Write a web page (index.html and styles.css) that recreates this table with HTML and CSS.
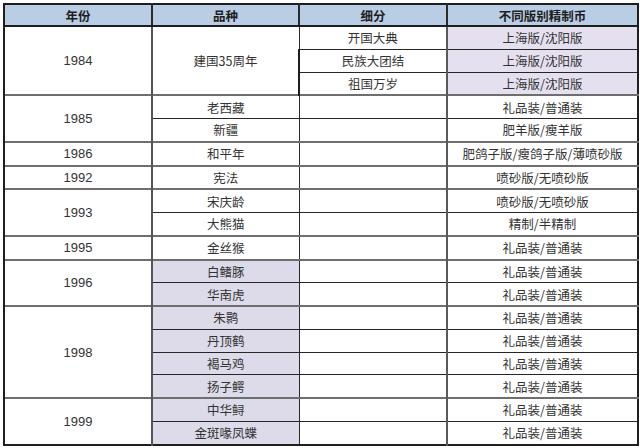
FILE: index.html
```html
<!DOCTYPE html>
<html lang="zh">
<head>
<meta charset="utf-8">
<link rel="stylesheet" href="styles.css">
</head>
<body>
<table class="coins">
  <colgroup>
    <col class="c-year"><col class="c-kind"><col class="c-sub"><col class="c-ver">
  </colgroup>
  <thead>
    <tr><th>年份</th><th>品种</th><th>细分</th><th>不同版别精制币</th></tr>
  </thead>
  <tbody>
    <tr class="grp"><td rowspan="3" class="y">1984</td><td rowspan="3">建国35周年</td><td>开国大典</td><td class="lav">上海版/沈阳版</td></tr>
    <tr><td>民族大团结</td><td class="lav">上海版/沈阳版</td></tr>
    <tr><td>祖国万岁</td><td class="lav">上海版/沈阳版</td></tr>
    <tr class="grp"><td rowspan="2" class="y">1985</td><td>老西藏</td><td></td><td>礼品装/普通装</td></tr>
    <tr><td>新疆</td><td></td><td>肥羊版/瘦羊版</td></tr>
    <tr class="grp"><td class="y">1986</td><td>和平年</td><td></td><td>肥鸽子版/瘦鸽子版/薄喷砂版</td></tr>
    <tr class="grp"><td class="y">1992</td><td>宪法</td><td></td><td>喷砂版/无喷砂版</td></tr>
    <tr class="grp"><td rowspan="2" class="y">1993</td><td>宋庆龄</td><td></td><td>喷砂版/无喷砂版</td></tr>
    <tr><td>大熊猫</td><td></td><td>精制/半精制</td></tr>
    <tr class="grp"><td class="y">1995</td><td>金丝猴</td><td></td><td>礼品装/普通装</td></tr>
    <tr class="grp"><td rowspan="2" class="y">1996</td><td class="lav2">白鳍豚</td><td></td><td>礼品装/普通装</td></tr>
    <tr><td class="lav2">华南虎</td><td></td><td>礼品装/普通装</td></tr>
    <tr class="grp"><td rowspan="4" class="y">1998</td><td class="lav2">朱鹮</td><td></td><td>礼品装/普通装</td></tr>
    <tr><td class="lav2">丹顶鹤</td><td></td><td>礼品装/普通装</td></tr>
    <tr><td class="lav2">褐马鸡</td><td></td><td>礼品装/普通装</td></tr>
    <tr><td class="lav2">扬子鳄</td><td></td><td>礼品装/普通装</td></tr>
    <tr class="grp"><td rowspan="2" class="y">1999</td><td class="lav2">中华鲟</td><td></td><td>礼品装/普通装</td></tr>
    <tr><td class="lav2">金斑喙凤蝶</td><td></td><td>礼品装/普通装</td></tr>
  </tbody>
</table>
</body>
</html>
```

FILE: styles.css
```css
html, body {
  margin: 0;
  padding: 0;
  background: #ffffff;
}

body {
  padding: 3px 0 0 3px;
  font-family: "Noto Sans CJK SC", "Liberation Sans", sans-serif;
}

.coins {
  border-collapse: collapse;
  table-layout: fixed;
  width: 634px;
  border: 2px solid #1e1e1e;
  font-size: 12.5px;
  color: #333333;
}

.c-year { width: 148px; }
.c-kind { width: 147px; }
.c-sub  { width: 148px; }
.c-ver  { width: 191px; }

.coins th,
.coins td {
  padding: 0;
  height: 21.75px;
  line-height: 15px;
  text-align: center;
  vertical-align: middle;
  border-top: 1px solid #262626;
  border-bottom: 1px solid #262626;
  white-space: nowrap;
  overflow: hidden;
}

.coins th {
  height: 20px;
  background: #b9cde5;
  font-weight: bold;
  color: #1e1e1e;
  border-bottom: 2px solid #1e1e1e;
  border-left: 2px solid #2a2a2a;
}

.coins td:first-child,
.coins th:first-child {
  border-left: 2px solid #1e1e1e;
}

.coins td.y {
  border-right: 2px solid #555555;
  font-family: "Liberation Sans", sans-serif;
  font-size: 13px;
}

.coins tr > td:nth-last-child(2) {
  border-right: 2px solid #5a5a5a;
}

.coins td {
  border-left: 1px solid #2a2a2a;
}

.coins tr.grp > td {
  border-top: 2px solid #6e6e6e;
}

.coins tbody tr:first-child > td {
  border-top: 2px solid #1e1e1e;
}

.lav {
  background: #e4e0ef;
}

.lav2 {
  background: #dddbe9;
}
```
